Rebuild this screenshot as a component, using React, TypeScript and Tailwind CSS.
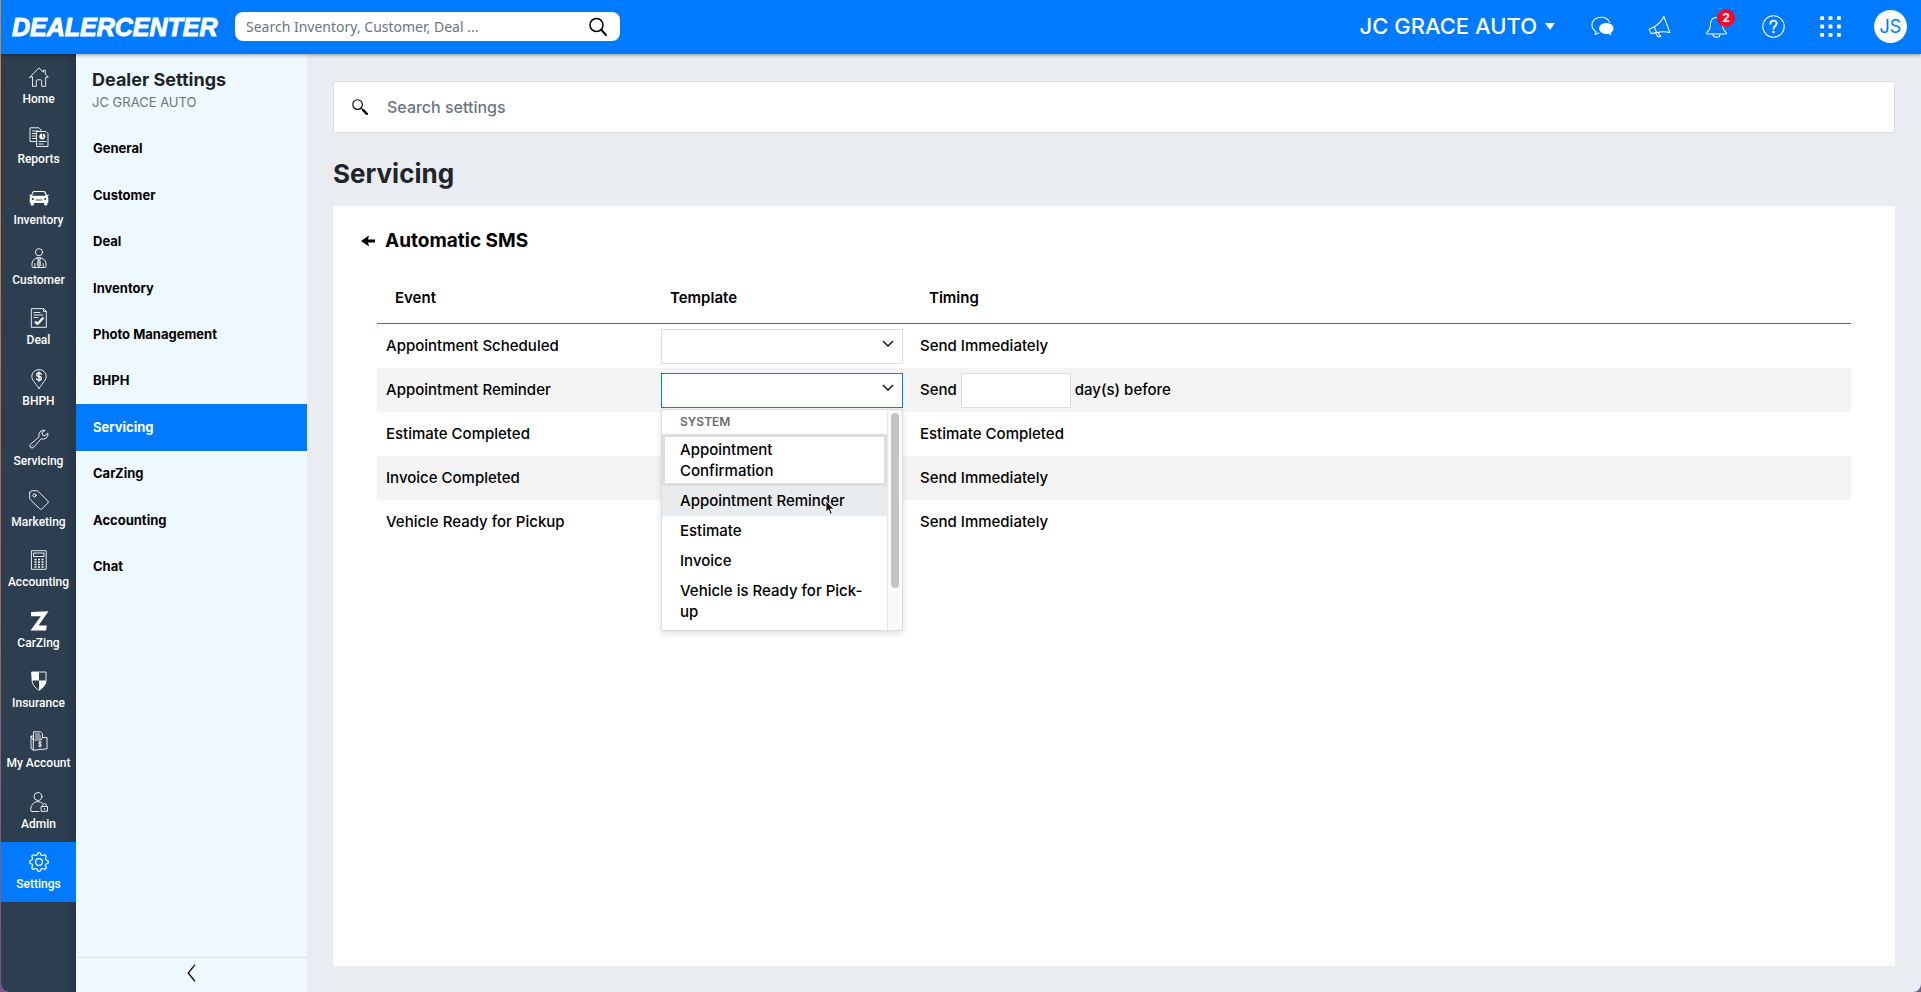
import { useState } from 'react';
import type { ReactNode } from 'react';
import clsx from 'clsx';
import { BsGear } from 'react-icons/bs';

const TEMPLATES = [
  'Appointment Confirmation',
  'Appointment Reminder',
  'Estimate',
  'Invoice',
  'Vehicle is Ready for Pick-up',
];

const SETTINGS_MENU = [
  'General',
  'Customer',
  'Deal',
  'Inventory',
  'Photo Management',
  'BHPH',
  'Servicing',
  'CarZing',
  'Accounting',
  'Chat',
];

function Icon({ children, className }: { children: ReactNode; className?: string }) {
  return (
    <svg
      viewBox="0 0 20 20"
      fill="none"
      stroke="currentColor"
      strokeWidth=".9"
      strokeLinejoin="round"
      strokeLinecap="round"
      aria-hidden="true"
      className={clsx('shrink-0', className ?? 'size-5')}
    >
      {children}
    </svg>
  );
}

const RAIL_ITEMS: { label: string; icon: ReactNode }[] = [
  {
    label: 'Home',
    icon: (
      <Icon>
        <path d="M.7 10.2 10 .9l4.3 4.2V3.2h2v4l3 3h-2.6v9.1h-4v-5.5a1 1 0 0 0-1-1H8.3a1 1 0 0 0-1 1v5.5H3.5v-9.1z" />
      </Icon>
    ),
  },
  {
    label: 'Reports',
    icon: (
      <Icon>
        <path d="M7 14.5H1V.8h9l2 2V4M3.5 4h6M3.5 6.5H7M3.5 9H7M3.5 11.5H7" />
        <path d="M8 4.5h9l2 2v13H8zM10 14.5h7M10 17h4" />
        <circle cx="13.3" cy="9.5" r="3" fill="currentColor" stroke="none" />
        <path d="M13.5 9.3V6.6M13.5 9.3l2 1.5" stroke="#2d3e50" strokeWidth=".8" />
      </Icon>
    ),
  },
  {
    label: 'Inventory',
    icon: (
      <Icon>
        <path
          d="M5 3h10q1.2 0 1.6 1l1.2 3 1.9-.6v1.2l-1.2.6q.8.8.8 1.8V15h-1v1.7q0 .8-1 .8h-1.1q-1 0-1-.8V15H4.8v1.7q0 .8-1 .8H2.7q-1 0-1-.8V15h-1v-5q0-1 .8-1.8L.3 7.6V6.4l1.9.6 1.2-3Q3.8 3 5 3z"
          fill="currentColor"
          stroke="none"
        />
        <path d="M5 4.5h10l1 2.8H4zM7 12h6" fill="#2d3e50" stroke="#2d3e50" />
        <circle cx="3.8" cy="11" r="1.1" fill="#2d3e50" stroke="none" />
        <circle cx="16.2" cy="11" r="1.1" fill="#2d3e50" stroke="none" />
      </Icon>
    ),
  },
  {
    label: 'Customer',
    icon: (
      <Icon>
        <circle cx="10" cy="4.2" r="3.6" />
        <path d="M8 10.2c-3.5.8-5 2.8-5 6v2.3q0 1 1 1h12q1 0 1-1v-2.3c0-3.2-1.5-5.2-5-6M5.8 15.5v4M14.2 15.5v4" />
        <path d="M8 9.5h4L11 12l.8 5.5L10 19l-1.8-1.5L9 12z" fill="currentColor" fillOpacity=".6" strokeWidth=".6" />
      </Icon>
    ),
  },
  {
    label: 'Deal',
    icon: (
      <Icon>
        <path d="M2.7.7h12l2.6 2.6v16H2.7zM14.5.7v2.8h2.8M5 4.5h6M5 7h9M5 9.5h4" />
        <path d="M6 13.5 8.5 16l6-6.5" strokeWidth="2.4" strokeLinecap="butt" />
      </Icon>
    ),
  },
  {
    label: 'BHPH',
    icon: (
      <Icon>
        <path d="M10 19.5C6 13.5 2.8 11 2.8 7.3a7.2 6.7 0 0 1 14.4 0C17.2 11 14 13.5 10 19.5z" />
        <path d="M12.3 5.3Q12 4 10 4 7.8 4 7.8 5.7T10 7.5t2.3 2-2.3 1.7q-2.2 0-2.5-1.5M10 3v9.2" strokeWidth="1.3" />
      </Icon>
    ),
  },
  {
    label: 'Servicing',
    icon: (
      <Icon>
        <path d="M15.8 1.2a5 5 0 0 0-5.7 6.6l-8.6 7.5a2.1 2.1 0 0 0 3 3.1l7.7-8.6a5 5 0 0 0 6.7-5.7L16 6.7l-2.4-.6-.6-2.2zM2.7 17.2l.5-.5" />
      </Icon>
    ),
  },
  {
    label: 'Marketing',
    icon: (
      <Icon>
        <path d="M.7 2.7v5.5q0 .8.6 1.4l9.5 9.3q1 1 2 0l6-5.8q1-1 0-2L9.5 1.6Q8.9.8 8 .8L3.5.7Q.7.7.7 2.7z" />
        <circle cx="5.5" cy="5.5" r="1.6" />
      </Icon>
    ),
  },
  {
    label: 'Accounting',
    icon: (
      <Icon>
        <path d="M2.8.7h14.4v18.6H2.8zM5 3h10v3.5H5z" />
        <path
          d="M5.5 9.5h2m1.5 0h2m1.5 0h2M5.5 12h2m1.5 0h2m1.5 0h2M5.5 14.5h2m1.5 0h2m1.5 0h2M5.5 17h2m1.5 0h2m1.5 0h2"
          strokeWidth="1.6"
          strokeLinecap="butt"
        />
      </Icon>
    ),
  },
  {
    label: 'CarZing',
    icon: (
      <Icon>
        <path d="M2 1 19.5.3 9.5 14.500h8.300L17 19.500H1.500L11.800 5.200H2z" fill="currentColor" stroke="none" />
      </Icon>
    ),
  },
  {
    label: 'Insurance',
    icon: (
      <Icon>
        <path d="M3 1h14v7.5c0 5-3 8.5-7 10.8-4-2.3-7-5.8-7-10.8z" />
        <path d="M3 1h7v8.5H3zM10 9.5h7c-.3 4.500-3 7.700-7 9.800z" fill="currentColor" stroke="none" />
      </Icon>
    ),
  },
  {
    label: 'My Account',
    icon: (
      <Icon>
        <path d="M4.5 8.5V.8h7l2 1.8v4M6.500 3h4M6.500 5h5M6.500 7h5M4.500 5H2v12.500l2.300 1.700L18 17.800V6.500h-4.500L12 9H4.300L2 5.500M4.300 9v10" />
        <path d="M12.500 11.800q-.3-.9-1.500-.9-1.300 0-1.300 1t1.300 1.200 1.400 1.200-1.400 1.100q-1.200 0-1.500-.9M11 10.200v6" />
      </Icon>
    ),
  },
  {
    label: 'Admin',
    icon: (
      <Icon>
        <circle cx="9" cy="4.5" r="4" />
        <path d="M10 19.5H3q-1.500 0-1.300-1.500C2 13.500 4 9.700 9 9.700q3 0 4.500 1.600M12.500 14.500h6v4.800h-6zM13.800 14.500v-1.200a1.700 1.700 0 0 1 3.400 0v1.200M15.500 16.500v1" />
      </Icon>
    ),
  },
  { label: 'Settings', icon: <BsGear className="size-5 shrink-0" aria-hidden="true" /> },
];

function Header() {
  return (
    <header className="relative z-20 flex h-[54px] shrink-0 items-center bg-[#007bff] pr-[14px] pb-px pl-[11px] text-white shadow-[0_1px_4px_rgba(0,0,0,0.4)]">
      <a
        href="#"
        className="w-[223px] shrink-0 font-['Liberation_Sans',sans-serif] text-[25px] leading-8 font-bold italic [-webkit-text-stroke:1px_white]"
      >
        DEALERCENTER
      </a>
      <div className="flex h-[29px] w-[385px] items-center rounded-lg bg-white pr-3 pl-[11px]">
        <input
          type="text"
          aria-label="Search inventory, customer, deal"
          placeholder="Search Inventory, Customer, Deal ..."
          className="min-w-0 flex-1 font-['Noto_Sans',sans-serif] text-sm text-black outline-none placeholder:text-[#6c757d]"
        />
        <button type="button" aria-label="Search" className="text-black">
          <Icon>
            <circle cx="8.5" cy="8" r="6.5" strokeWidth="1.5" />
            <path d="m13.5 13 4.500 5" strokeWidth="2" />
          </Icon>
        </button>
      </div>

      <div className="ml-auto flex items-center">
        <button type="button" className="mr-9 flex items-center gap-2 text-[22px] font-medium">
          JC GRACE AUTO
          <svg viewBox="0 0 10 7" className="h-[7px] w-[10px]" fill="currentColor" aria-hidden="true">
            <path d="M0 0h10L5 7z" />
          </svg>
        </button>
        <div className="flex items-center gap-[34px]">
          <button type="button" aria-label="Messages">
            <Icon className="size-[23px]">
              <path d="M4.5 14.5C2 13 .8 10.8.8 8.6.8 4.8 4.3 2 8.7 2c3.6 0 6.4 1.8 7.5 4.4M4.500 14.500 3.500 17l3.300-1.400" />
              <path
                d="M13.3 7c3.6 0 6.2 2 6.2 4.8 0 1.7-.9 3.2-2.5 4l.9 2-2.800-1.400c-4.600.8-8-1.500-8-4.600C7.100 9 9.700 7 13.300 7z"
                fill="currentColor"
                stroke="none"
              />
            </Icon>
          </button>
          <button type="button" aria-label="Announcements">
            <Icon className="size-[23px]">
              <path d="M13.8 1.3 19 15.2c-3.500-1-7-1-11.500 0l-4.800 1L1 12.500l4.500-2.300c4-2.300 6.500-5 8.300-8.900zM5.500 10.200l2 5M6.500 15.500l2 3.500h2.800l-.5-1.300-1-.3-1-2.300" />
            </Icon>
          </button>
          <button type="button" aria-label="Notifications, 2 unread" className="relative">
            <Icon className="size-[23px]">
              <path d="M10 2.200c-4 0-5.300 3-5.300 6.500 0 3.800-1 4.800-2.700 6-1 .8-.7 1.800.5 1.800h15c1.200 0 1.500-1 .5-1.800-1.700-1.200-2.700-2.200-2.700-6 0-3.500-1.300-6.500-5.300-6.500zM7 16.700c0 3.500 6 3.500 6 0" />
            </Icon>
            <span className="absolute -top-[6px] left-3 flex size-[18px] items-center justify-center rounded-full bg-[#f5092d] text-xs font-bold">
              2
            </span>
          </button>
          <button type="button" aria-label="Help">
            <Icon className="size-[23px]">
              <circle cx="10" cy="10" r="9.3" />
              <path d="M7.3 7.6c0-3.700 5.400-3.600 5.400-.3 0 2.200-2.700 2.300-2.700 4.700" strokeWidth="1.6" />
              <circle cx="10" cy="14.8" r="1.1" fill="currentColor" stroke="none" />
            </Icon>
          </button>
          <button type="button" aria-label="Apps">
            <Icon className="size-[23px]">
              {[1, 8.3, 15.6].map((y) =>
                [1, 8.3, 15.6].map((x) => (
                  <rect key={`${x}-${y}`} x={x} y={y} width="3.4" height="3.4" rx=".8" fill="currentColor" stroke="none" />
                ))
              )}
            </Icon>
          </button>
        </div>
        <button
          type="button"
          aria-label="Profile"
          className="ml-8 flex size-[33px] items-center justify-center rounded-full bg-white text-lg text-[#007bff]"
        >
          JS
        </button>
      </div>
    </header>
  );
}

function Rail() {
  return (
    <nav
      aria-label="Main"
      className="w-[75px] shrink-0 bg-linear-to-r from-[#2d3e50] from-85% to-[#27374a] pt-[2px] pb-[90px]"
    >
      <ul className="grid h-full auto-rows-fr">
        {RAIL_ITEMS.map(({ label, icon }) => (
          <li key={label}>
            <a
              href="#"
              className={clsx(
                "flex h-full flex-col items-center justify-center gap-1 pt-px font-['Roboto',sans-serif] text-xs leading-4 font-medium whitespace-nowrap text-white",
                label === 'Settings' && 'bg-[#007bff]'
              )}
            >
              {icon}
              {label}
            </a>
          </li>
        ))}
      </ul>
    </nav>
  );
}

function SettingsMenu() {
  return (
    <aside className="flex w-[231px] shrink-0 flex-col bg-[#edf9fe]">
      <div className="px-4 pt-[14px] pb-[14px]">
        <h2 className="text-lg leading-6 font-bold text-[#212529]">Dealer Settings</h2>
        <p className="text-[13px] leading-5 text-[#6c757d]">JC GRACE AUTO</p>
      </div>
      <ul className="grid min-h-[464px] auto-rows-fr">
        {SETTINGS_MENU.map((item) => (
          <li key={item}>
            <a
              href="#"
              className={clsx(
                'flex h-full items-center px-[17px] text-[13px] font-bold',
                item === 'Servicing' ? 'bg-[#007bff] text-white' : 'text-black'
              )}
            >
              {item}
            </a>
          </li>
        ))}
      </ul>
      <button
        type="button"
        aria-label="Collapse menu"
        className="mt-auto flex h-[35px] items-start justify-center border-t border-[#d9e1e4] pt-[6px] text-black"
      >
        <svg
          viewBox="0 0 9 18"
          className="h-[18px] w-[9px]"
          fill="none"
          stroke="currentColor"
          strokeWidth="1.3"
          aria-hidden="true"
        >
          <path d="M8 .7 1.2 9 8 17.3" />
        </svg>
      </button>
    </aside>
  );
}

function TemplateSelect({ event, open }: { event: string; open?: boolean }) {
  const [value, setValue] = useState('');

  return (
    <div className="relative h-[35px] w-[242px]">
      <select
        aria-label={`${event} template`}
        value={value}
        onChange={(e) => setValue(e.target.value)}
        className={clsx(
          'size-full appearance-none border bg-white px-3 text-[15px] outline-none',
          open ? 'border-[#007bff]' : 'border-[#dedede]'
        )}
      >
        <option value=""></option>
        {TEMPLATES.map((template) => (
          <option key={template}>{template}</option>
        ))}
      </select>
      <svg
        viewBox="0 0 12 8"
        className="pointer-events-none absolute top-[11px] right-[9px] h-2 w-3"
        fill="none"
        stroke="#212529"
        strokeWidth="1.6"
        aria-hidden="true"
      >
        <path d="m1 1 5 5 5-5" />
      </svg>
      {open && <TemplateList onPick={setValue} />}
    </div>
  );
}

function TemplateList({ onPick }: { onPick: (template: string) => void }) {
  return (
    <div className="absolute top-full left-0 z-10 mt-px flex h-[222px] w-full border border-[#dcdcdc] bg-white shadow-[0_3px_6px_rgba(0,0,0,0.12)]">
      <div role="listbox" aria-label="Templates" className="min-w-0 flex-1 overflow-hidden">
        <div className="px-[18px] text-xs leading-6 font-semibold text-[#6a6a6a]">SYSTEM</div>
        {TEMPLATES.map((template, i) => (
          <button
            key={template}
            type="button"
            role="option"
            aria-selected={i === 0}
            onClick={() => onPick(template)}
            className={clsx(
              'block w-full pr-4 text-left text-[15px] leading-[21px] font-medium text-black',
              i === 0 && 'border-3 border-[#dedede] py-[2px] pl-[15px]',
              i > 0 && 'pt-1 pb-[5px] pl-[18px]',
              i === 1 && 'bg-[#e8ecef]'
            )}
          >
            {template}
          </button>
        ))}
      </div>
      <div className="w-[15px] border-l border-[#e8e8e8] bg-[#fafafa] px-[3px] pt-[3px]">
        <div className="h-[175px] rounded-full bg-[#c4c4c4]" />
      </div>
      {/* Mouse pointer */}
      <svg viewBox="0 0 10 16" className="absolute top-[90px] left-[163px] h-4 w-[10px]" aria-hidden="true">
        <path d="M1 1v11l2.5-2.3 1.8 4.5 2-.8-1.9-4.4H9z" fill="#111" stroke="#fff" strokeWidth=".8" />
      </svg>
    </div>
  );
}

const EVENTS: { name: string; timing: ReactNode; open?: boolean }[] = [
  { name: 'Appointment Scheduled', timing: 'Send Immediately' },
  {
    name: 'Appointment Reminder',
    open: true,
    timing: (
      <label className="flex items-center gap-1">
        Send
        <input
          type="text"
          aria-label="Days before appointment"
          className="h-[35px] w-[110px] border border-[#dedede] bg-white px-2 outline-none"
        />
        day(s) before
      </label>
    ),
  },
  { name: 'Estimate Completed', timing: 'Estimate Completed' },
  { name: 'Invoice Completed', timing: 'Send Immediately' },
  { name: 'Vehicle Ready for Pickup', timing: 'Send Immediately' },
];

function AutomaticSms() {
  return (
    <section className="flex-1 bg-white px-7 pt-[22px]">
      <div className="flex items-center gap-[10px]">
        <button type="button" aria-label="Back">
          <svg viewBox="0 0 14 12" className="h-3 w-[14px]" fill="currentColor" aria-hidden="true">
            <path d="M0 6 8 .5 7 4.5h7v3H7l1 4z" />
          </svg>
        </button>
        <h2 className="text-[19px] leading-[26px] font-bold">Automatic SMS</h2>
      </div>
      <div className="mt-5 px-4">
        <table className="w-full table-fixed border-separate border-spacing-0 text-left text-[15px] font-medium">
          <colgroup>
            <col className="w-[275px]" />
            <col className="w-[259px]" />
            <col />
          </colgroup>
          <thead>
            <tr className="h-[50px]">
              <th className="border-b border-[#007bff] px-[18px] font-semibold">Event</th>
              <th className="border-b border-[#007bff] px-[18px] font-semibold">Template</th>
              <th className="border-b border-[#007bff] px-[18px] font-semibold">Timing</th>
            </tr>
          </thead>
          <tbody>
            {EVENTS.map(({ name, timing, open }) => (
              <tr key={name} className="h-11 even:bg-[#f4f4f4]">
                <td className="px-[9px]">{name}</td>
                <td className="px-[9px]">
                  <TemplateSelect event={name} open={open} />
                </td>
                <td className="px-[9px]">{timing}</td>
              </tr>
            ))}
          </tbody>
        </table>
      </div>
    </section>
  );
}

export default function App() {
  return (
    <div className="flex min-h-screen bg-linear-to-b from-[#c08a50] via-[#b06a4a] to-[#75558a] pl-px font-['Inter',sans-serif] text-black">
      <div className="flex min-w-0 flex-1 flex-col overflow-hidden rounded-b-lg bg-[#e9edf2]">
        <Header />
        <div className="flex flex-1">
          <Rail />
          <SettingsMenu />
          <main className="flex min-w-0 flex-1 flex-col px-[26px] pt-[27px] pb-[26px]">
            <label className="flex h-[52px] items-center gap-[19px] border border-[#dedfe2] bg-white px-[18px]">
              <Icon className="size-4">
                <circle cx="7" cy="7" r="6" strokeWidth="1.4" />
                <path d="m11.5 11.5 2 2" strokeWidth="1.4" />
                <path d="m14 14 4.5 4.5" strokeWidth="3" />
              </Icon>
              <input
                type="text"
                aria-label="Search settings"
                placeholder="Search settings"
                className="min-w-0 flex-1 text-base font-medium outline-none placeholder:text-[#6c757d]"
              />
            </label>
            <h1 className="pt-[26px] pb-[18px] text-[26px] leading-[29px] font-bold text-[#212529]">Servicing</h1>
            <AutomaticSms />
          </main>
        </div>
      </div>
    </div>
  );
}
